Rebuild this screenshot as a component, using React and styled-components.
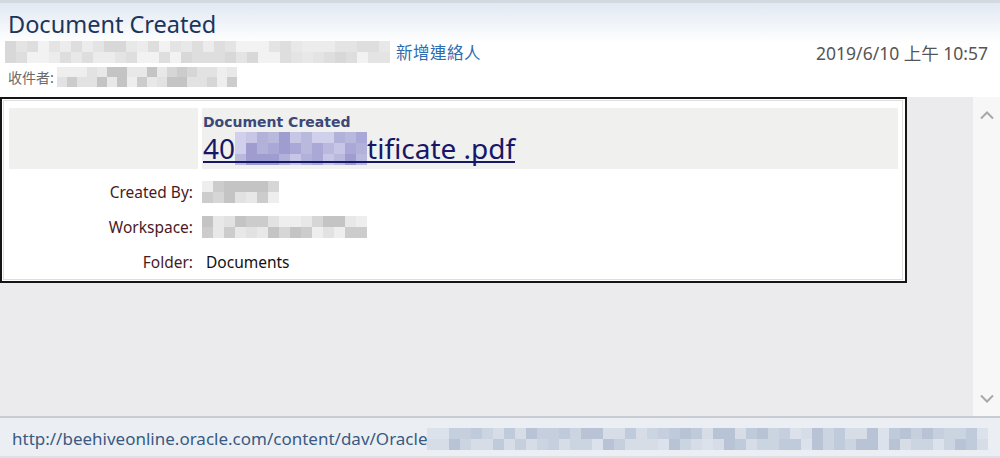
import React from 'react'
import styled, { createGlobalStyle } from 'styled-components'

const GlobalStyle = createGlobalStyle`
  html, body {
    margin: 0;
    padding: 0;
    width: 1000px;
    height: 458px;
    overflow: hidden;
    background: #fff;
    font-family: 'Noto Sans', 'Noto Sans CJK TC', sans-serif;
  }
`

const Page = styled.div`
  width: 1000px;
  height: 458px;
  display: flex;
  flex-direction: column;
`

const Header = styled.header`
  height: 97px;
  flex: 0 0 97px;
  box-sizing: border-box;
  border-top: 3px solid #d3d9e1;
  background: linear-gradient(#e2e9f3 0px, #f3f6fa 24px, #fff 40px);
  padding: 6px 12px 0 8px;
  display: flex;
  flex-direction: column;
  overflow: hidden;
`

const Title = styled.h1`
  margin: 0;
  font-size: 23.5px;
  font-weight: 400;
  line-height: 31px;
  color: #1b355c;
`

const MetaRow = styled.div`
  display: flex;
  align-items: center;
  height: 24px;
  margin-left: -3px;
`

const AddContact = styled.a`
  font-family: 'Noto Sans CJK TC', sans-serif;
  font-size: 16.5px;
  color: #2c6cb0;
  margin-left: 6px;
  letter-spacing: 0.5px;
  cursor: pointer;
`

const DateText = styled.span`
  margin-left: auto;
  font-size: 17.5px;
  color: #555;
  font-family: 'Noto Sans', 'Noto Sans CJK TC', sans-serif;
`

const ToRow = styled.div`
  display: flex;
  align-items: center;
  height: 22px;
  margin-top: 2px;
`

const ToLabel = styled.span`
  font-family: 'Noto Sans CJK TC', sans-serif;
  font-size: 14px;
  color: #6a6a6a;
  margin-right: 3px;
`

const Body = styled.main`
  flex: 1 1 auto;
  display: flex;
  background: #ebebed;
  min-height: 0;
`

const Content = styled.div`
  flex: 1 1 auto;
`

const Card = styled.div`
  width: 907px;
  height: 186px;
  box-sizing: border-box;
  border: 2px solid #151515;
  background: #fff;
  padding: 1px 2px 1px 1px;
`

const CardInner = styled.div`
  height: 100%;
  box-sizing: border-box;
  border: 1px solid #dedede;
  padding: 7px 4px 0 5px;
  display: grid;
  grid-template-columns: 189px 1fr;
  grid-template-rows: 66px repeat(3, 35px);
  column-gap: 4px;
`

const HeadCell = styled.div`
  background: #f0f0ef;
  padding: ${p => (p.$main ? '6px 0 0 1px' : '0')};
  margin-bottom: 5px;
  display: flex;
  flex-direction: column;
`

const CardLabel = styled.div`
  font-family: 'DejaVu Sans', Verdana, sans-serif;
  font-weight: 700;
  font-size: 14px;
  line-height: 16px;
  color: #3b4878;
`

const FileLink = styled.a`
  display: flex;
  align-items: center;
  align-self: flex-start;
  font-size: 28px;
  line-height: 36px;
  color: #17176a;
  text-decoration: none;
  cursor: pointer;
  position: relative;
  &::after {
    content: '';
    position: absolute;
    left: 0;
    right: 0;
    bottom: 3px;
    height: 2px;
    background: #17176a;
  }
`

const FieldLabel = styled.div`
  display: flex;
  align-items: center;
  justify-content: flex-end;
  padding-right: 5px;
  font-size: 15.5px;
  color: #4a1a24;
`

const FieldValue = styled.div`
  display: flex;
  align-items: center;
  font-size: 15.5px;
  color: #111;
  padding-left: ${p => (p.$text ? '4px' : '0')};
`

const Scrollbar = styled.div`
  flex: 0 0 27px;
  background: #f7f7f7;
  display: flex;
  flex-direction: column;
  justify-content: space-between;
  align-items: center;
  padding: 14px 0 13px;
`

const StatusBar = styled.footer`
  flex: 0 0 42px;
  box-sizing: border-box;
  border-top: 2px solid #c9cdd3;
  border-bottom: 2px solid #dde1e6;
  background: #ebeff4;
  display: flex;
  align-items: center;
  padding: 3px 0 0 12px;
  overflow: hidden;
`

const Url = styled.span`
  font-size: 17px;
  color: #3a5a82;
  white-space: nowrap;
`

const MosaicGrid = styled.div`
  display: grid;
  grid-template-columns: repeat(${p => p.$cols}, ${p => p.$size}px);
  grid-auto-rows: ${p => p.$size}px;
  flex: 0 0 auto;
`

const shades = {
  gray: ['#eeeeee', '#e2e2e2', '#d6d6d6', '#cccccc', '#c4c4c4', '#e8e8e8'],
  light: ['#f2f2f2', '#e8e8e8', '#dedede', '#ececec', '#e4e4e4', '#d8d8d8'],
  violet: ['#b9b8dd', '#a9a8d6', '#c7c6e6', '#9f9dd0', '#d0d0ec', '#b2b1da'],
  blue: ['#d6dde7', '#cbd4e1', '#bfcadb', '#dbe2eb', '#c5cfde', '#b8c4d6'],
}

const Mosaic = ({ cols, rows, size = 11, tone = 'gray', seed = 1 }) => {
  const palette = shades[tone]
  let s = seed
  const cells = []
  for (let i = 0; i < cols * rows; i++) {
    s = (s * 9301 + 49297) % 233280
    cells.push(palette[Math.floor(s / 7) % palette.length])
  }
  return (
    <MosaicGrid $cols={cols} $size={size}>
      {cells.map((c, i) => (
        <span key={i} style={{ background: c }} />
      ))}
    </MosaicGrid>
  )
}

const Chevron = ({ down }) => (
  <svg width="14" height="9" viewBox="0 0 14 9">
    <path
      d={down ? 'M1 1.5 L7 7.5 L13 1.5' : 'M1 7.5 L7 1.5 L13 7.5'}
      fill="none"
      stroke="#a8a8a8"
      strokeWidth="2"
    />
  </svg>
)

const App = () => (
  <Page>
    <GlobalStyle />
    <Header>
      <Title>Document Created</Title>
      <MetaRow>
        <Mosaic cols={35} rows={2} size={11} tone="light" seed={7} />
        <AddContact>新增連絡人</AddContact>
        <DateText>2019/6/10 上午 10:57</DateText>
      </MetaRow>
      <ToRow>
        <ToLabel>收件者:</ToLabel>
        <Mosaic cols={18} rows={2} size={10} tone="gray" seed={3} />
      </ToRow>
    </Header>

    <Body>
      <Content>
        <Card>
          <CardInner>
            <HeadCell />
            <HeadCell $main>
              <CardLabel>Document Created</CardLabel>
              <FileLink>
                40
                <Mosaic cols={12} rows={3} size={11} tone="violet" seed={11} />
                tificate .pdf
              </FileLink>
            </HeadCell>

            <FieldLabel>Created By:</FieldLabel>
            <FieldValue>
              <Mosaic cols={7} rows={2} size={11} tone="gray" seed={5} />
            </FieldValue>

            <FieldLabel>Workspace:</FieldLabel>
            <FieldValue>
              <Mosaic cols={15} rows={2} size={11} tone="gray" seed={9} />
            </FieldValue>

            <FieldLabel>Folder:</FieldLabel>
            <FieldValue $text>Documents</FieldValue>
          </CardInner>
        </Card>
      </Content>
      <Scrollbar>
        <Chevron />
        <Chevron down />
      </Scrollbar>
    </Body>

    <StatusBar>
      <Url>http://beehiveonline.oracle.com/content/dav/Oracle</Url>
      <Mosaic cols={51} rows={2} size={11} tone="blue" seed={13} />
    </StatusBar>
  </Page>
)

export default App
